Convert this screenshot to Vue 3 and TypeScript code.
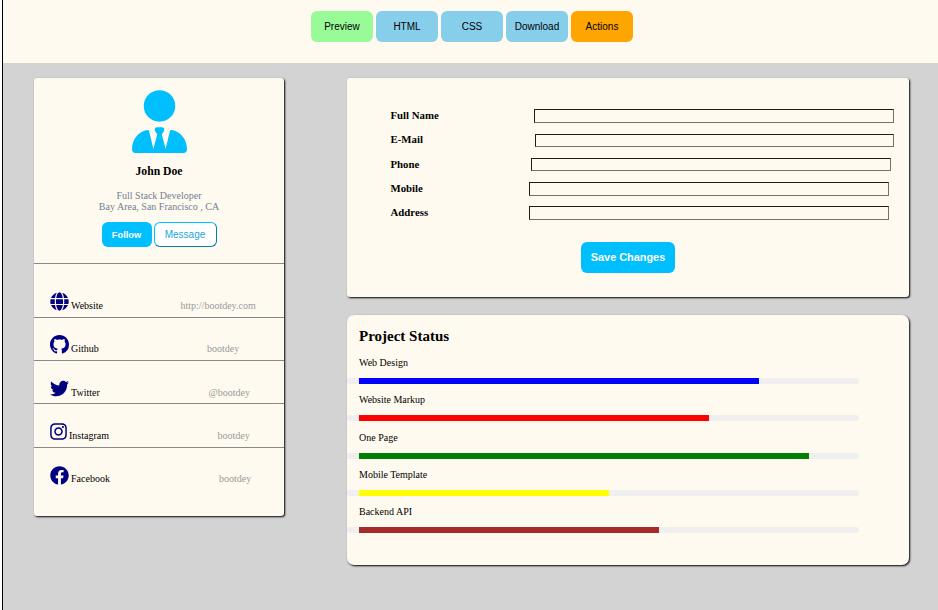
<script setup lang="ts">
interface Tool {
  label: string
  tone: 'preview' | 'source' | 'actions'
}

interface SocialLink {
  key: string
  label: string
  value: string
  path: string
  viewBox: string
}

interface Field {
  key: string
  label: string
}

interface Project {
  name: string
  width: number
  color: string
}

const tools: Tool[] = [
  { label: 'Preview', tone: 'preview' },
  { label: 'HTML', tone: 'source' },
  { label: 'CSS', tone: 'source' },
  { label: 'Download', tone: 'source' },
  { label: 'Actions', tone: 'actions' },
]

const links: SocialLink[] = [
  {
    key: 'website',
    label: 'Website',
    value: 'http://bootdey.com',
    viewBox: '0 0 496 512',
    path: 'M336.5 160C322 70.7 287.8 8 248 8s-74 62.700-88.500 152h177zM152 256c0 22.200 1.200 43.500 3.300 64h185.300c2.100-20.500 3.300-41.800 3.300-64s-1.200-43.500-3.300-64H155.300c-2.100 20.500-3.300 41.800-3.300 64zm324.700-96c-28.600-67.900-86.500-120.400-158-141.600 24.400 33.800 41.200 84.700 50 141.600h108zM177.200 18.400C105.800 39.600 47.800 92.100 19.300 160h108c8.700-56.900 25.500-107.800 49.900-141.600zM487.400 192H372.700c2.100 21 3.300 42.500 3.300 64s-1.200 43-3.300 64h114.600c5.500-20.500 8.600-41.800 8.600-64s-3.100-43.500-8.500-64zM120 256c0-21.500 1.200-43 3.300-64H8.600C3.200 212.500 0 233.800 0 256s3.200 43.500 8.600 64h114.600c-2-21-3.200-42.500-3.200-64zm39.500 96c14.500 89.300 48.700 152 88.500 152s74-62.700 88.500-152h-177zm159.300 141.600c71.400-21.200 129.400-73.700 158-141.600h-108c-8.800 56.900-25.600 107.800-50 141.600zM19.300 352c28.600 67.900 86.500 120.400 158 141.600-24.400-33.800-41.200-84.700-50-141.600h-108z',
  },
  {
    key: 'github',
    label: 'Github',
    value: 'bootdey',
    viewBox: '0 0 16 16',
    path: 'M8 0C3.580 0 0 3.580 0 8c0 3.540 2.290 6.530 5.470 7.590.4.070.55-.17.55-.38 0-.19-.01-.82-.01-1.490-2.010.37-2.530-.49-2.690-.94-.09-.23-.48-.94-.82-1.130-.28-.15-.68-.52-.01-.53.63-.01 1.080.58 1.230.82.72 1.210 1.870.87 2.330.66.07-.52.28-.87.51-1.070-1.780-.2-3.640-.89-3.640-3.950 0-.87.31-1.590.82-2.150-.08-.2-.36-1.020.08-2.120 0 0 .67-.21 2.200.82.64-.18 1.320-.27 2-.27s1.360.09 2 .27c1.530-1.040 2.200-.82 2.200-.82.44 1.100.16 1.920.08 2.120.51.56.82 1.270.82 2.150 0 3.070-1.870 3.750-3.650 3.950.29.25.54.73.54 1.480 0 1.070-.01 1.930-.01 2.200 0 .21.15.46.55.38A8.010 8.010 0 0 0 16 8c0-4.420-3.580-8-8-8z',
  },
  {
    key: 'twitter',
    label: 'Twitter',
    value: '@bootdey',
    viewBox: '0 0 512 512',
    path: 'M459.370 151.716c.325 4.548.325 9.097.325 13.645 0 138.720-105.583 298.558-298.558 298.558-59.452 0-114.680-17.219-161.137-47.106 8.447.974 16.568 1.299 25.340 1.299 49.055 0 94.213-16.568 130.274-44.832-46.132-.975-84.792-31.188-98.112-72.772 6.498.974 12.995 1.624 19.818 1.624 9.421 0 18.843-1.300 27.614-3.573-48.081-9.747-84.143-51.980-84.143-102.985v-1.299c13.969 7.797 30.214 12.670 47.431 13.319-28.264-18.843-46.781-51.005-46.781-87.391 0-19.492 5.197-37.360 14.294-52.954 51.655 63.675 129.300 105.258 216.365 109.807-1.624-7.797-2.599-15.918-2.599-24.040 0-57.828 46.782-104.934 104.934-104.934 30.213 0 57.502 12.670 76.670 33.137 23.715-4.548 46.456-13.320 66.599-25.340-7.798 24.366-24.366 44.833-46.132 57.827 21.117-2.273 41.584-8.122 60.426-16.243-14.292 20.791-32.161 39.308-52.628 54.253z',
  },
  {
    key: 'instagram',
    label: 'Instagram',
    value: 'bootdey',
    viewBox: '0 0 448 512',
    path: 'M224.100 141c-63.600 0-114.900 51.300-114.900 114.900s51.300 114.900 114.900 114.900S339 319.500 339 255.900 287.700 141 224.100 141zm0 189.600c-41.100 0-74.700-33.500-74.700-74.700s33.500-74.700 74.700-74.700 74.700 33.500 74.700 74.700-33.600 74.700-74.700 74.700zm146.400-194.300c0 14.900-12 26.800-26.800 26.800-14.900 0-26.800-12-26.800-26.800s12-26.800 26.800-26.800 26.800 12 26.800 26.800zm76.100 27.200c-1.700-35.900-9.900-67.700-36.200-93.900-26.200-26.200-58-34.400-93.900-36.200-37-2.100-147.900-2.100-184.900 0-35.800 1.700-67.600 9.900-93.900 36.100s-34.400 58-36.200 93.900c-2.100 37-2.100 147.900 0 184.900 1.700 35.900 9.900 67.700 36.200 93.900s58 34.400 93.900 36.200c37 2.100 147.900 2.100 184.900 0 35.900-1.700 67.700-9.900 93.900-36.200 26.200-26.200 34.400-58 36.200-93.900 2.100-37 2.100-147.800 0-184.800zM398.800 388c-7.800 19.600-22.900 34.700-42.600 42.600-29.500 11.700-99.500 9-132.100 9s-102.700 2.600-132.100-9c-19.600-7.800-34.700-22.900-42.600-42.600-11.700-29.500-9-99.500-9-132.100s-2.600-102.700 9-132.100c7.800-19.600 22.900-34.700 42.600-42.600 29.500-11.700 99.500-9 132.100-9s102.700-2.600 132.100 9c19.600 7.800 34.700 22.900 42.600 42.600 11.700 29.500 9 99.500 9 132.100s2.700 102.700-9 132.100z',
  },
  {
    key: 'facebook',
    label: 'Facebook',
    value: 'bootdey',
    viewBox: '0 0 512 512',
    path: 'M504 256C504 119 393 8 256 8S8 119 8 256c0 123.780 90.690 226.380 209.250 245V327.690h-63V256h63v-54.640c0-62.150 37-96.480 93.670-96.480 27.140 0 55.520 4.840 55.520 4.840v61h-31.280c-30.800 0-40.410 19.120-40.410 38.730V256h68.780l-11 71.690h-57.780V501C413.310 482.380 504 379.780 504 256z',
  },
]

const fields: Field[] = [
  { key: 'name', label: 'Full Name' },
  { key: 'email', label: 'E-Mail' },
  { key: 'phone', label: 'Phone' },
  { key: 'mobile', label: 'Mobile' },
  { key: 'address', label: 'Address' },
]

const projects: Project[] = [
  { name: 'Web Design', width: 400, color: 'blue' },
  { name: 'Website Markup', width: 350, color: 'red' },
  { name: 'One Page', width: 450, color: 'green' },
  { name: 'Mobile Template', width: 250, color: 'yellow' },
  { name: 'Backend API', width: 300, color: 'brown' },
]
</script>

<template>
  <div class="page">
    <header class="toolbar">
      <button v-for="tool in tools" :key="tool.label" class="tool" :class="tool.tone">
        {{ tool.label }}
      </button>
    </header>

    <main class="content">
      <aside class="card profile">
        <section class="identity">
          <svg class="avatar" viewBox="0 0 166 190" aria-hidden="true">
            <circle cx="83" cy="48" r="47.500" />
            <path
              d="M46 121Q51 120 52 125L64.500 178L76 134L69.500 124Q66 112 76 112H90Q100 112 96.500 124L90 134L101.500 178L114 125Q115 120 120 121C146 125 166 149 166 179Q166 190 155 190H11Q0 190 0 179C0 149 20 125 46 121Z"
            />
          </svg>
          <h1>John Doe</h1>
          <p>Full Stack Developer<br />Bay Area, San Francisco , CA</p>
          <div class="actions">
            <button class="follow">Follow</button>
            <button class="message">Message</button>
          </div>
        </section>
        <ul class="links">
          <li v-for="link in links" :key="link.key" :class="link.key">
            <svg :viewBox="link.viewBox" aria-hidden="true"><path :d="link.path" /></svg>
            <span class="label">{{ link.label }}</span>
            <span class="value">{{ link.value }}</span>
          </li>
        </ul>
      </aside>

      <div class="column">
        <form class="card details" @submit.prevent>
          <div v-for="field in fields" :key="field.key" class="field" :class="field.key">
            <label :for="field.key">{{ field.label }}</label>
            <input :id="field.key" type="text" />
          </div>
          <button class="save" type="submit">Save Changes</button>
        </form>

        <section class="card status">
          <h2>Project Status</h2>
          <div v-for="project in projects" :key="project.name" class="project">
            <span>{{ project.name }}</span>
            <div class="track">
              <div
                class="fill"
                :style="{ width: project.width + 'px', backgroundColor: project.color }"
              ></div>
            </div>
          </div>
        </section>
      </div>
    </main>
  </div>
</template>

<style>
body {
  background: #fff;
}
</style>

<style scoped>
.page {
  box-sizing: border-box;
  display: flex;
  flex-direction: column;
  height: 610px;
  margin-left: 2px;
  border-left: 1px solid #000;
  background: lightgray;
  font-family: 'Liberation Serif', 'Times New Roman', serif;
  font-size: 10px;
  color: #000;
  overflow: hidden;
}

button {
  box-sizing: border-box;
  padding: 0;
  border: 0;
  border-radius: 6px;
  font-family: 'Liberation Sans', Arial, sans-serif;
  font-size: 10px;
  line-height: 12px;
}

.toolbar {
  box-sizing: border-box;
  display: flex;
  gap: 3px;
  height: 63px;
  padding: 11px 0 0 308px;
  background: floralwhite;
}

.tool {
  width: 62px;
  height: 31px;
  color: #000;
}

.preview {
  background: palegreen;
}

.source {
  background: skyblue;
}

.actions.tool {
  background: orange;
}

.content {
  display: grid;
  grid-template-columns: 250px 562px;
  column-gap: 63px;
  align-items: start;
  padding: 15px 0 0 31px;
}

.card {
  box-sizing: border-box;
  border-radius: 3px;
  background: floralwhite;
  box-shadow: 1px 1px 2px #000;
}

.profile {
  height: 438px;
}

.identity {
  box-sizing: border-box;
  display: flex;
  flex-direction: column;
  align-items: center;
  height: 186px;
  padding-top: 12px;
  border-bottom: 1px solid #888;
}

.avatar {
  width: 55px;
  height: 63px;
  fill: deepskyblue;
}

h1 {
  margin: 12px 0 0;
  font-size: 11.7px;
  line-height: 14px;
}

.identity p {
  margin: 11px 0 0;
  line-height: 11px;
  text-align: center;
  color: slategray;
}

.identity .actions {
  display: flex;
  gap: 2px;
  margin-top: 10px;
}

.follow {
  width: 50px;
  height: 25px;
  background: deepskyblue;
  color: #fff;
  font-weight: bold;
  font-size: 9.300px;
}

.message {
  width: 63px;
  height: 25px;
  border: 1px outset deepskyblue;
  background: #fff;
  color: #1ea5dc;
}

.links {
  margin: 0;
  padding: 0;
  list-style: none;
}

.links li {
  box-sizing: border-box;
  display: flex;
  align-items: flex-end;
  height: 43px;
  padding: 0 0 5px 16px;
  border-bottom: 1px solid #888;
  line-height: 12px;
}

.links li.website {
  height: 54px;
}

.links li.twitter {
  padding-bottom: 4px;
}

.links li.instagram {
  height: 44px;
}

.links li.facebook {
  padding-bottom: 6px;
  border-bottom: 0;
}

.links svg {
  flex: none;
  width: 19px;
  height: 19px;
  margin-bottom: 1px;
  fill: navy;
}

.links .facebook svg {
  margin-bottom: 0;
}

.label {
  width: 109.500px;
  margin-left: 2px;
}

.value {
  color: #999;
}

.github .label {
  width: 136px;
}

.twitter .label {
  width: 137.500px;
}

.instagram svg {
  width: 17px;
}

.instagram .label {
  width: 148.500px;
}

.facebook .label {
  width: 148px;
}

.details {
  height: 219px;
  padding: 26px 0 0 43px;
}

.field {
  display: flex;
  align-items: center;
  height: 24.250px;
}

.field label {
  box-sizing: border-box;
  width: 139px;
  padding: 0 0 2px 0.500px;
  font-size: 10.800px;
  font-weight: bold;
}

.field input {
  box-sizing: border-box;
  width: 360px;
  height: 13.500px;
  padding: 0;
  border: 1px solid;
  background: transparent;
  border-color: #201c1c #757069 #757069 #201c1c;
}

.field.name label {
  width: 144px;
}

.field.email label {
  width: 145px;
}

.field.email input {
  width: 359px;
}

.field.phone label {
  width: 141px;
}

.save {
  display: block;
  width: 94px;
  height: 31px;
  margin: 17px 0 0 191px;
  padding-bottom: 1px;
  background: deepskyblue;
  color: #fff;
  font-size: 10.900px;
  font-weight: bold;
}

.status {
  height: 250px;
  margin-top: 18px;
  padding-top: 12px;
  border-radius: 7px;
}

h2 {
  margin: 0 0 12px 12px;
  font-size: 15px;
  line-height: 18px;
}

.project {
  height: 37.300px;
}

.project span {
  display: block;
  margin-left: 12px;
  line-height: 12px;
}

.track {
  box-sizing: border-box;
  width: 512px;
  height: 6px;
  margin-top: 9px;
  padding-left: 12px;
  border-radius: 3px;
  background: #efefef;
}

.fill {
  height: 100%;
}
</style>
